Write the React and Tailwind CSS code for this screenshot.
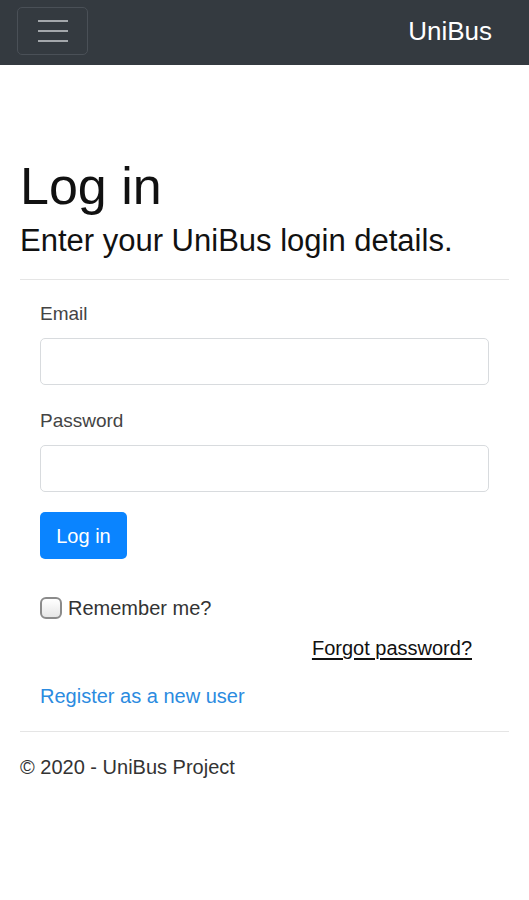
import React from "react";

const App = () => {
  return (
    <div className="min-h-[900px] bg-white font-['Liberation_Sans',Arial,sans-serif] text-[#212529]">
      <nav className="flex h-[65px] items-center justify-between bg-[#343a40] pr-[37px] pl-[17px]">
        <button className="-mt-[4px] flex h-[48px] w-[71px] flex-col items-center justify-center gap-[8px] rounded-[5px] border border-[#4a5057]">
          <span className="block h-[2px] w-[30px] bg-[#a3a7ab]" />
          <span className="block h-[2px] w-[30px] bg-[#a3a7ab]" />
          <span className="block h-[2px] w-[30px] bg-[#a3a7ab]" />
        </button>
        <span className="-mt-[2px] text-[26px] text-white">UniBus</span>
      </nav>

      <main className="px-[20px] pt-[92px]">
        <h1 className="text-[52px] leading-[58px] text-[#111]">Log in</h1>
        <h2 className="mt-[8px] text-[31px] leading-[36px] text-[#111]">
          Enter your UniBus login details.
        </h2>
        <hr className="mt-[20px] border-[#e5e5e5]" />

        <form className="px-[20px] pt-[22px]" onSubmit={(e) => e.preventDefault()}>
          <label className="block text-[19px] leading-[24px] text-[#444]">Email</label>
          <input
            type="email"
            className="mt-[12px] block h-[47px] w-[449px] rounded-[5px] border border-[#d8dbde] px-3 outline-none"
          />

          <label className="mt-[24px] block text-[19px] leading-[24px] text-[#444]">
            Password
          </label>
          <input
            type="password"
            className="mt-[12px] block h-[47px] w-[449px] rounded-[5px] border border-[#d8dbde] px-3 outline-none"
          />

          <button
            type="submit"
            className="mt-[20px] block h-[47px] w-[87px] rounded-[5px] bg-[#0a84ff] text-[20px] text-white"
          >
            Log in
          </button>

          <div className="mt-[37px] flex items-center gap-[6px]">
            <span className="block h-[22px] w-[22px] rounded-[6px] border-2 border-[#8b8b8b] bg-gradient-to-b from-white to-[#e6e6e6]" />
            <span className="text-[20px] leading-[24px] text-[#333]">Remember me?</span>
          </div>

          <div className="mt-[16px] flex justify-end pr-[17px]">
            <a href="#" className="text-[20px] leading-[24px] text-[#111] underline underline-offset-[3px]">
              Forgot password?
            </a>
          </div>

          <a href="#" className="mt-[24px] block text-[20px] leading-[24px] text-[#2b8be0]">
            Register as a new user
          </a>
        </form>

        <hr className="mt-[23px] border-[#e5e5e5]" />
        <footer className="pt-[23px] text-[20px] leading-[24px] text-[#333]">
          © 2020 - UniBus Project
        </footer>
      </main>
    </div>
  );
};

export default App;
